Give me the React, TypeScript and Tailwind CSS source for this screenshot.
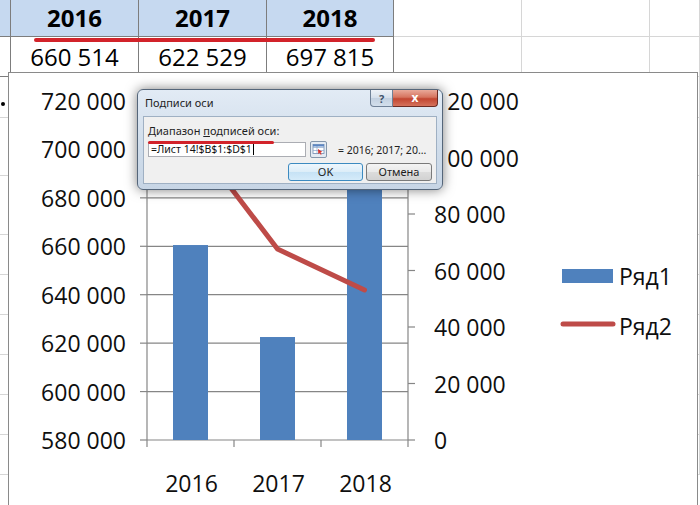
import React from 'react'

// spreadsheet grid behind the chart
const ROW_H = ['h-[37px]', 'h-[40px]', 'h-[41px]', 'h-[58px]', 'h-[59px]', 'h-[40px]', 'h-[40px]', 'h-[40px]', 'h-[40px]', 'h-[40px]', 'h-[40px]']
const NCOLS = 7

const years = ['2016', '2017', '2018']
const values = ['660 514', '622 529', '697 815']

function Sheet() {
  return (
    <div className="grid grid-cols-[11px_128px_128px_127px_128px_128px_1fr] w-[700px]">
      {ROW_H.map((h, r) =>
        Array.from({ length: NCOLS }).map((_, c) => {
          const inTable = r < 2 && c < 4
          const head = r === 0 && c < 4
          let text: React.ReactNode = null
          if (r === 0 && c >= 1 && c <= 3) text = <span className="font-bold">{years[c - 1]}</span>
          if (r === 1 && c >= 1 && c <= 3) text = values[c - 1]
          return (
            <div
              key={`${r}-${c}`}
              className={`${h} flex items-center justify-center border-r border-b text-[24px] text-black ${
                inTable ? 'border-[#7d7d7d]' : 'border-[#d6d6d6]'
              } ${head ? 'bg-[#c6d9f0]' : 'bg-white'}`}
            >
              {text}
            </div>
          )
        })
      )}
    </div>
  )
}

const GRID_TOP = 101
const GRID_BOTTOM = 440
const LEFT = 147
const RIGHT = 408
const leftVals = ['720 000', '700 000', '680 000', '660 000', '640 000', '620 000', '600 000', '580 000']
const rightVals = ['120 000', '100 000', '80 000', '60 000', '40 000', '20 000', '0']
const bars = [660514, 622529, 697815]
const line = [108000, 67600, 53100]

function yLeft(v: number) {
  return GRID_TOP + ((720000 - v) / 140000) * (GRID_BOTTOM - GRID_TOP)
}
function yRight(v: number) {
  return GRID_BOTTOM - (v / 120000) * (GRID_BOTTOM - GRID_TOP)
}

function Chart() {
  const catW = (RIGHT - LEFT) / 3
  const cx = (i: number) => LEFT + catW * (i + 0.5)
  const pts = line.map((v, i) => `${cx(i)},${yRight(v)}`).join(' ')
  return (
    <div className="absolute left-[8px] top-[72px] w-[690px] h-[440px] border border-[#8a8a8a] bg-white">
      <svg
        viewBox="9 73 688 438"
        className="block w-full h-full font-['Open_Sans',sans-serif] text-[23px]"
      >
        {leftVals.map((l, i) => {
          const y = GRID_TOP + (i * (GRID_BOTTOM - GRID_TOP)) / 7
          return (
            <g key={l}>
              <line x1={LEFT} x2={RIGHT} y1={y} y2={y} stroke="#868686" strokeWidth="1.2" />
              <line x1={LEFT - 7} x2={LEFT} y1={y} y2={y} stroke="#868686" strokeWidth="1.2" />
              <text x={126} y={y} textAnchor="end" dominantBaseline="central" fill="#0f0f0f">
                {l}
              </text>
            </g>
          )
        })}
        {rightVals.map((l, i) => {
          const y = GRID_TOP + (i * (GRID_BOTTOM - GRID_TOP)) / 6
          return (
            <g key={l}>
              <line x1={RIGHT} x2={RIGHT + 7} y1={y} y2={y} stroke="#868686" strokeWidth="1.2" />
              <text x={434} y={y} dominantBaseline="central" fill="#0f0f0f">
                {l}
              </text>
            </g>
          )
        })}
        <line x1={LEFT} x2={LEFT} y1={GRID_TOP} y2={GRID_BOTTOM} stroke="#868686" strokeWidth="1.2" />
        <line x1={RIGHT} x2={RIGHT} y1={GRID_TOP} y2={GRID_BOTTOM} stroke="#868686" strokeWidth="1.2" />
        {[0, 1, 2, 3].map((i) => (
          <line key={i} x1={LEFT + catW * i} x2={LEFT + catW * i} y1={GRID_BOTTOM} y2={GRID_BOTTOM + 7} stroke="#868686" strokeWidth="1.2" />
        ))}
        {bars.map((v, i) => (
          <rect key={i} x={cx(i) - 17.5} y={yLeft(v)} width={35} height={GRID_BOTTOM - yLeft(v)} fill="#4f81bd" />
        ))}
        <polyline points={pts} fill="none" stroke="#be4b48" strokeWidth="5" strokeLinejoin="round" strokeLinecap="round" />
        {years.map((y, i) => (
          <text key={y} x={cx(i) + 1} y={483} textAnchor="middle" dominantBaseline="central" fill="#0f0f0f">
            {y}
          </text>
        ))}
        <rect x={562} y={269} width={51} height={14} fill="#4f81bd" />
        <text x={619} y={276} dominantBaseline="central" fill="#0f0f0f">Ряд1</text>
        <line x1={563} x2={613} y1={324} y2={324} stroke="#be4b48" strokeWidth="5" strokeLinecap="round" />
        <text x={619} y={326} dominantBaseline="central" fill="#0f0f0f">Ряд2</text>
      </svg>
    </div>
  )
}

function RangeIcon() {
  return (
    <svg width="17" height="17" viewBox="0 0 17 17">
      <rect x="0.5" y="0.5" width="16" height="16" rx="1.5" fill="#e4ebf3" stroke="#8496ab" />
      <rect x="3" y="3.5" width="11" height="9" fill="#ffffff" stroke="#6f8bb0" strokeWidth="0.8" />
      <line x1="3" x2="14" y1="6.5" y2="6.5" stroke="#8aa6cc" strokeWidth="0.7" />
      <line x1="3" x2="14" y1="9.5" y2="9.5" stroke="#8aa6cc" strokeWidth="0.7" />
      <line x1="7" x2="7" y1="3.5" y2="12.5" stroke="#8aa6cc" strokeWidth="0.7" />
      <rect x="3" y="3.5" width="11" height="2" fill="#5b86c4" />
      <path d="M8 8 L12.5 11 L10.5 11.3 L11.6 13.4 L10.7 13.8 L9.6 11.8 L8.3 13 Z" fill="#d9302a" />
    </svg>
  )
}

function Dialog() {
  return (
    <div className="absolute left-[137px] top-[89px] w-[306px] h-[101px] rounded-[6px] border border-[#55667a] bg-[linear-gradient(180deg,#e2ebf5_0%,#cfdcea_60%,#c7d5e5_100%)] shadow-[0_0_12px_rgba(0,0,0,0.5)] font-['Noto_Sans',sans-serif]">
      <div className="flex h-[26px] items-start justify-between pl-[7px] pr-[4px]">
        <span className="pt-[6px] text-[11px] leading-[14px] text-[#1e1e1e]">Подписи оси</span>
        <div className="flex">
          <div className="flex h-[17px] w-[23px] items-center justify-center rounded-bl-[4px] border border-t-0 border-[#6f8197] bg-[linear-gradient(180deg,#eef2f7_0%,#d5dfeb_50%,#c2d0e0_51%,#d3dfec_100%)] text-[11px] font-bold leading-none text-[#40536b]">
            ?
          </div>
          <div className="flex h-[17px] w-[45px] items-center justify-center rounded-br-[4px] border border-t-0 border-l-0 border-[#6b2b23] bg-[linear-gradient(180deg,#e9a999_0%,#d6745f_45%,#c24631_55%,#d5725c_100%)] text-[12px] font-bold leading-none text-white">
            x
          </div>
        </div>
      </div>
      <div className="mx-[5px] h-[68px] border border-[#9fb0c3] bg-[#f0f0f0] px-[4px] pt-[7px] text-[11px] leading-[14px] text-[#1e1e1e]">
        <div>
          Диапазон <span className="underline">п</span>одписей оси:
        </div>
        <div className="mt-[3px] flex items-center">
          <div className="flex h-[15px] w-[158px] items-center border border-[#abadb3] bg-white pl-[2px] text-[10.5px] leading-none text-[#111]">
            =Лист 14!$B$1:$D$1
            <span className="ml-[1px] h-[11px] w-px bg-black" />
          </div>
          <div className="ml-[4px]">
            <RangeIcon />
          </div>
          <span className="ml-[11px] text-[10.5px] text-[#222]">= 2016; 2017; 20...</span>
        </div>
        <div className="mt-[5px] flex justify-end gap-[3px]">
          <div className="flex h-[18px] w-[75px] items-center justify-center rounded-[3px] border border-[#3c8ac0] bg-[linear-gradient(180deg,#eef7fd_0%,#dcedf8_50%,#c6e2f5_51%,#d5ebf9_100%)] text-[11px]">
            OK
          </div>
          <div className="flex h-[18px] w-[66px] items-center justify-center rounded-[3px] border border-[#7a7a7a] bg-[linear-gradient(180deg,#f4f4f4_0%,#e9e9e9_50%,#dcdcdc_51%,#d2d2d2_100%)] text-[11px]">
            Отмена
          </div>
        </div>
      </div>
      <div className="absolute left-[10px] top-[51px] h-[3px] w-[126px] rounded-full bg-[#d2232a]" />
    </div>
  )
}

export default function App() {
  return (
    <div className="relative h-[505px] w-[700px] overflow-hidden bg-white font-['Open_Sans',sans-serif]">
      <Sheet />
      <div className="absolute left-[34px] top-[38px] h-[4px] w-[341px] rounded-full bg-[#d2232a]" />
      <div className="absolute left-[1px] top-[102px] h-[4px] w-[4px] rounded-full bg-black" />
      <Chart />
      <Dialog />
    </div>
  )
}
